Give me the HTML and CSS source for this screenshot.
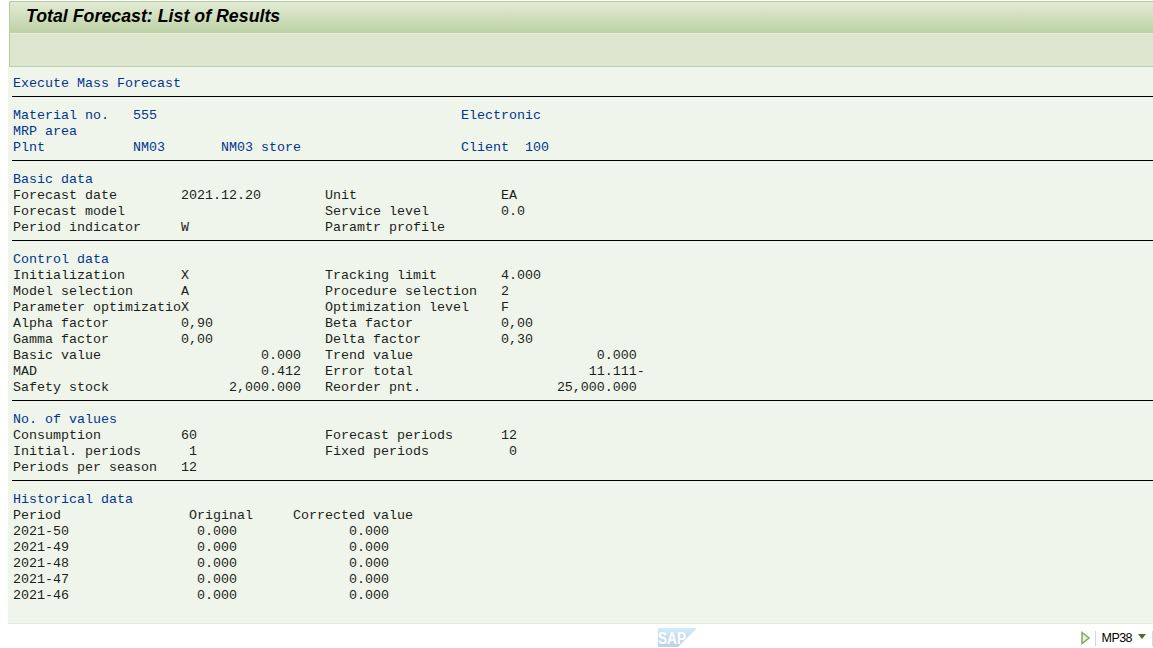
FILE: index.html
```html
<!DOCTYPE html>
<html lang="en">
<head>
<meta charset="utf-8">
<title>Total Forecast: List of Results</title>
<link rel="stylesheet" href="styles.css">
</head>
<body>
<div class="window">
  <header class="titlebar"><h1 class="title">Total Forecast: List of Results</h1></header>
  <div class="toolbar"></div>
  <main class="list">
<pre class="row head">Execute Mass Forecast</pre>
<hr class="rule">
<pre class="row head">Material no.   555                                      Electronic</pre>
<pre class="row head">MRP area</pre>
<pre class="row head">Plnt           NM03       NM03 store                    Client  100</pre>
<hr class="rule">
<pre class="row head">Basic data</pre>
<pre class="row">Forecast date        2021.12.20        Unit                  EA</pre>
<pre class="row">Forecast model                         Service level         0.0</pre>
<pre class="row">Period indicator     W                 Paramtr profile</pre>
<hr class="rule">
<pre class="row head">Control data</pre>
<pre class="row">Initialization       X                 Tracking limit        4.000</pre>
<pre class="row">Model selection      A                 Procedure selection   2</pre>
<pre class="row">Parameter optimizatioX                 Optimization level    F</pre>
<pre class="row">Alpha factor         0,90              Beta factor           0,00</pre>
<pre class="row">Gamma factor         0,00              Delta factor          0,30</pre>
<pre class="row">Basic value                    0.000   Trend value                       0.000</pre>
<pre class="row">MAD                            0.412   Error total                      11.111-</pre>
<pre class="row">Safety stock               2,000.000   Reorder pnt.                 25,000.000</pre>
<hr class="rule">
<pre class="row head">No. of values</pre>
<pre class="row">Consumption          60                Forecast periods      12</pre>
<pre class="row">Initial. periods      1                Fixed periods          0</pre>
<pre class="row">Periods per season   12</pre>
<hr class="rule">
<pre class="row head">Historical data</pre>
<pre class="row">Period                Original     Corrected value</pre>
<pre class="row">2021-50                0.000              0.000</pre>
<pre class="row">2021-49                0.000              0.000</pre>
<pre class="row">2021-48                0.000              0.000</pre>
<pre class="row">2021-47                0.000              0.000</pre>
<pre class="row">2021-46                0.000              0.000</pre>
  </main>
  <footer class="status">
    <div class="logo-slot">
      <svg class="sap-logo" width="40" height="20" viewBox="0 0 40 20" aria-hidden="true">
        <defs><linearGradient id="sapg" x1="0" y1="0" x2="0" y2="1"><stop offset="0" stop-color="#cfecfb"/><stop offset="1" stop-color="#bcd0ea"/></linearGradient></defs>
        <polygon points="0,0 39,0 20,19 0,19" fill="url(#sapg)"/>
        <text x="0" y="15.5" class="sap-text" textLength="28" lengthAdjust="spacingAndGlyphs">SAP</text>
      </svg>
    </div>
    <div class="sys">
      <svg class="play" width="9" height="14" viewBox="0 0 9 14" aria-hidden="true"><path d="M1 1.5 L8 7 L1 12.5 Z" fill="#e6f0da" stroke="#85a862" stroke-width="1.5"/></svg>
      <span class="sep"></span>
      <span class="sysname">MP38</span>
      <span class="caret"></span>
      <span class="sep end"></span>
    </div>
  </footer>
</div>
</body>
</html>
```

FILE: styles.css
```css
html, body { margin: 0; padding: 0; height: 100%; background: #fff; overflow: hidden; }
.window { width: 1153px; height: 648px; display: flex; flex-direction: column; padding: 1px 0 0 9px; box-sizing: border-box; }
.titlebar { height: 33px; flex: none; box-sizing: border-box; border: 1px solid #b5cba0; border-right: 0; border-bottom: 1px solid #e8efdd; background: linear-gradient(#e2ebd4, #bcd1a5); display: flex; align-items: center; padding: 0 0 3px 16px; }
.title { margin: 0; font: italic bold 17.8px "Liberation Sans", Arial, sans-serif; color: #000; }
.toolbar { height: 33px; flex: none; box-sizing: border-box; background: #dde7cf; border-left: 1px solid #b5cba0; border-bottom: 1px solid #b9cda7; }
.list { height: 557px; flex: none; box-sizing: border-box; margin-left: -1px; background: #f0f5eb; padding: 9px 0 0 5px; font: 13.333px/16px "Liberation Mono", "Courier New", monospace; border-bottom: 1px solid #e3e9dc; }
.row { margin: 0; height: 16px; font: inherit; white-space: pre; color: #1a1f1a; }
.head { color: #00368f; }
.rule { margin: 0 0 0 -1px; height: 16px; border: 0; box-sizing: border-box; background: linear-gradient(#000, #000) no-repeat 0 4px / 100% 1px; }
.status { flex: 1; position: relative; display: flex; justify-content: flex-end; align-items: flex-start; background: #fff; }
.logo-slot { position: absolute; left: 649px; top: 4px; line-height: 0; }
.sap-text { font: bold 16.5px "Liberation Sans", Arial, sans-serif; fill: #fff; }
.sys { display: flex; align-items: center; height: 16px; margin-top: 6px; font: 12.5px "Liberation Sans", Arial, sans-serif; letter-spacing: -.55px; color: #000; }
.play { margin-right: 5px; }
.sep { width: 1px; height: 15px; background: #d8d8d8; }
.sysname { margin-left: 6px; }
.caret { width: 0; height: 0; margin: -4px 6px 0 6px; border: 4.5px solid transparent; border-top: 5px solid #4c6e32; border-bottom: 0; }
```
